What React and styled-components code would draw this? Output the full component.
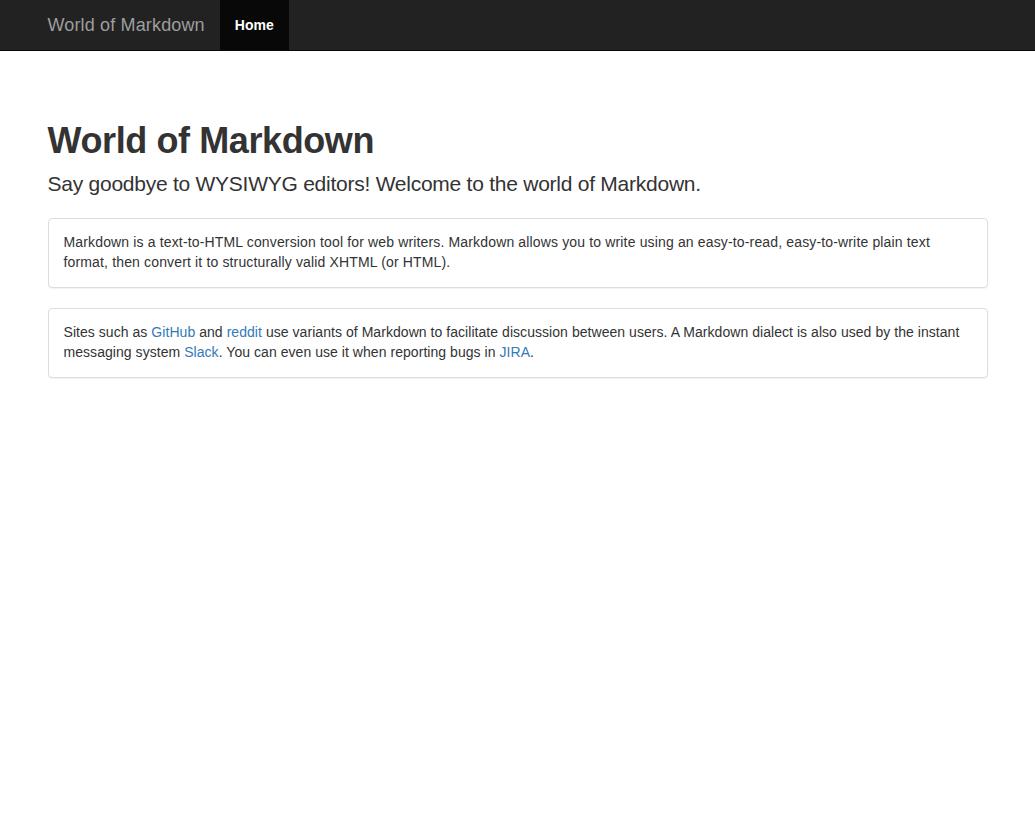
import styled, { createGlobalStyle } from "styled-components";

const GlobalStyle = createGlobalStyle`
  html, body {
    margin: 0;
    padding: 0;
    background: #fff;
  }
  body {
    font-family: "Liberation Sans", Arial, sans-serif;
    font-size: 14px;
    line-height: 1.42857143;
    color: #333;
  }
  * {
    box-sizing: border-box;
  }
`;

const links = {
  GitHub: "https://github.com",
  reddit: "https://reddit.com",
  Slack: "https://slack.com",
  JIRA: "https://atlassian.com",
};

export default function App() {
  return (
    <>
      <GlobalStyle />
      <Navbar>
        <NavContainer>
          <Brand href="#">World of Markdown</Brand>
          <NavList>
            <NavItem active>
              <a href="#">Home</a>
            </NavItem>
          </NavList>
        </NavContainer>
      </Navbar>
      <Main>
        <Title>World of Markdown</Title>
        <Lead>Say goodbye to WYSIWYG editors! Welcome to the world of Markdown.</Lead>
        <Panel>
          <PanelBody $tracking="0.15px">
            Markdown is a text-to-HTML conversion tool for web writers. Markdown allows you to
            write using an easy-to-read, easy-to-write plain text format, then convert it to
            structurally valid XHTML (or HTML).
          </PanelBody>
        </Panel>
        <Panel>
          <PanelBody $tracking="0.05px">
            Sites such as <Link href={links.GitHub}>GitHub</Link> and{" "}
            <Link href={links.reddit}>reddit</Link> use variants of Markdown to facilitate
            discussion between users. A Markdown dialect is also used by the instant messaging
            system <Link href={links.Slack}>Slack</Link>. You can even use it when reporting bugs
            in <Link href={links.JIRA}>JIRA</Link>.
          </PanelBody>
        </Panel>
      </Main>
    </>
  );
}

const Navbar = styled.nav`
  height: 51px;
  background-color: #222;
  border-bottom: 1px solid #080808;
`;

const NavContainer = styled.div`
  width: 970px;
  margin: 0 auto;
  padding: 0 15px;
  display: flex;
  align-items: stretch;
  height: 50px;
`;

const Brand = styled.a`
  display: block;
  padding: 15px 15px;
  margin-left: -15px;
  font-size: 18px;
  line-height: 20px;
  letter-spacing: 0.15px;
  height: 50px;
  color: #9d9d9d;
  text-decoration: none;
`;

const NavList = styled.ul`
  display: flex;
  list-style: none;
  margin: 0;
  padding: 0;
`;

const NavItem = styled.li`
  > a {
    display: block;
    padding: 15px;
    line-height: 20px;
    font-size: 14px;
    font-weight: ${(p) => (p.active ? "bold" : "normal")};
    color: ${(p) => (p.active ? "#fff" : "#9d9d9d")};
    background-color: ${(p) => (p.active ? "#080808" : "transparent")};
    text-decoration: none;
  }
`;

const Main = styled.main`
  width: 970px;
  margin: 0 auto;
  padding: 48px 15px 0;
`;

const Title = styled.h1`
  margin: 22px 0 8px;
  font-size: 36px;
  font-weight: bold;
  line-height: 1.1;
  letter-spacing: -0.4px;
  color: #333;
`;

const Lead = styled.p`
  margin: 0 0 20px;
  font-size: 21px;
  font-weight: 300;
  line-height: 1.4;
  letter-spacing: -0.25px;
`;

const Panel = styled.div`
  margin-bottom: 20px;
  background-color: #fff;
  border: 1px solid #ddd;
  border-radius: 4px;
  box-shadow: 0 1px 1px rgba(0, 0, 0, 0.05);
`;

const PanelBody = styled.div`
  padding: 13px 15px 15px;
  letter-spacing: ${(p) => p.$tracking || "normal"};
`;

const Link = styled.a`
  color: #337ab7;
  text-decoration: none;
`;
